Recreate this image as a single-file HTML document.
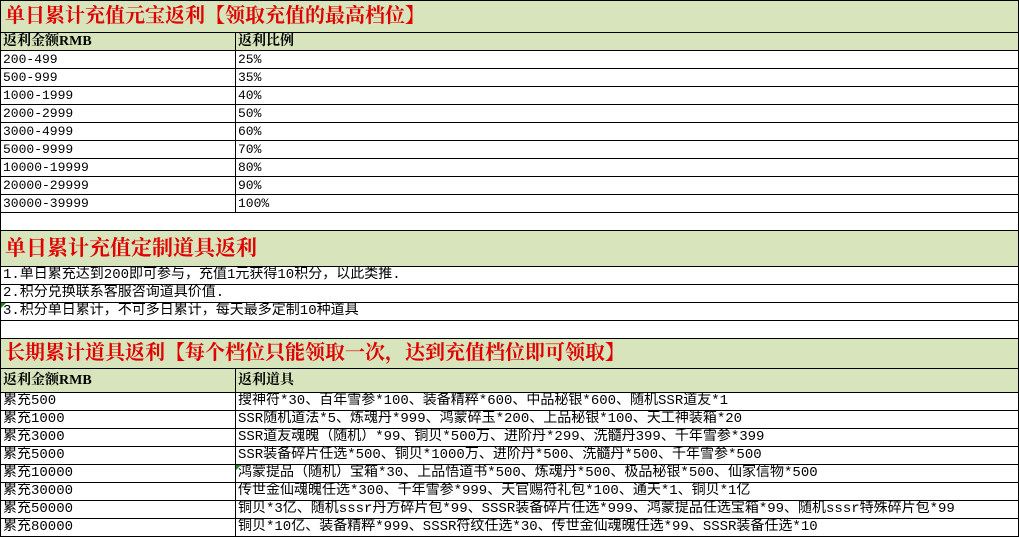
<!DOCTYPE html>
<html><head><meta charset="utf-8"><style>
*{margin:0;padding:0;box-sizing:border-box}
body{width:1019px;height:537px;overflow:hidden;background:#fff;font-family:"Liberation Mono","Noto Sans CJK SC",monospace;font-size:14px;color:#000;position:relative}
.r{position:absolute;left:0;width:1019px;border-bottom:1px solid #000;border-right:1px solid #000;border-left:1px solid #000}
.c{position:absolute;top:0;bottom:0;white-space:nowrap;overflow:hidden;padding-left:2px;line-height:17px}
.c1{left:0;width:235px;border-right:1px solid #000}
.c2{left:235px;right:0}
.n{font-size:13px}
.g{background:#d8e4bc}
.t{color:#e00000;font-family:"Liberation Serif","Noto Serif CJK SC",serif;font-weight:bold;padding-left:4px}
.h{font-weight:bold;font-family:"Liberation Serif","Noto Serif CJK SC",serif;font-size:14px}
.full{left:0;right:0}
.tri{position:absolute;width:0;height:0;border-top:5px solid #1a8a1a;border-right:5px solid transparent;left:0;top:0}
</style></head><body>
<div class="r g" style="top:0;height:33px;border-top:1px solid #000"><div class="c full t" style="font-size:20px;line-height:31px">单日累计充值元宝返利【领取充值的最高档位】</div></div>
<div class="r g" style="top:33px;height:18px"><div class="c c1 h">返利金额RMB</div><div class="c c2 h">返利比例</div></div>
<div class="r n" style="top:51px;height:18px"><div class="c c1">200-499</div><div class="c c2">25%</div></div>
<div class="r n" style="top:69px;height:18px"><div class="c c1">500-999</div><div class="c c2">35%</div></div>
<div class="r n" style="top:87px;height:18px"><div class="c c1">1000-1999</div><div class="c c2">40%</div></div>
<div class="r n" style="top:105px;height:18px"><div class="c c1">2000-2999</div><div class="c c2">50%</div></div>
<div class="r n" style="top:123px;height:18px"><div class="c c1">3000-4999</div><div class="c c2">60%</div></div>
<div class="r n" style="top:141px;height:18px"><div class="c c1">5000-9999</div><div class="c c2">70%</div></div>
<div class="r n" style="top:159px;height:18px"><div class="c c1">10000-19999</div><div class="c c2">80%</div></div>
<div class="r n" style="top:177px;height:18px"><div class="c c1">20000-29999</div><div class="c c2">90%</div></div>
<div class="r n" style="top:195px;height:18px"><div class="c c1">30000-39999</div><div class="c c2">100%</div></div>
<div class="r" style="top:213px;height:18px"></div>
<div class="r g" style="top:231px;height:36px"><div class="c full t" style="font-size:21px;line-height:34px">单日累计充值定制道具返利</div></div>
<div class="r" style="top:267px;height:18px"><div class="c full">1.单日累充达到200即可参与，充值1元获得10积分，以此类推.</div></div>
<div class="r" style="top:285px;height:18px"><div class="c full">2.积分兑换联系客服咨询道具价值.</div></div>
<div class="r" style="top:303px;height:18px"><div class="c full"><span class="tri"></span>3.积分单日累计，不可多日累计，每天最多定制10种道具</div></div>
<div class="r" style="top:321px;height:18px"></div>
<div class="r g" style="top:339px;height:30px"><div class="c full t" style="font-size:20px;line-height:29px">长期累计道具返利【每个档位只能领取一次，达到充值档位即可领取】</div></div>
<div class="r g" style="top:369px;height:24px"><div class="c c1 h" style="line-height:24px">返利金额RMB</div><div class="c c2 h" style="line-height:24px">返利道具</div></div>
<div class="r" style="top:393px;height:18px"><div class="c c1">累充500</div><div class="c c2">搜神符*30、百年雪参*100、装备精粹*600、中品秘银*600、随机SSR道友*1</div></div>
<div class="r" style="top:411px;height:18px"><div class="c c1">累充1000</div><div class="c c2">SSR随机道法*5、炼魂丹*999、鸿蒙碎玉*200、上品秘银*100、天工神装箱*20</div></div>
<div class="r" style="top:429px;height:18px"><div class="c c1">累充3000</div><div class="c c2">SSR道友魂魄（随机）*99、铜贝*500万、进阶丹*299、洗髓丹399、千年雪参*399</div></div>
<div class="r" style="top:447px;height:18px"><div class="c c1">累充5000</div><div class="c c2">SSR装备碎片任选*500、铜贝*1000万、进阶丹*500、洗髓丹*500、千年雪参*500</div></div>
<div class="r" style="top:465px;height:18px"><div class="c c1">累充10000</div><div class="c c2"><span class="tri"></span>鸿蒙提品（随机）宝箱*30、上品悟道书*500、炼魂丹*500、极品秘银*500、仙家信物*500</div></div>
<div class="r" style="top:483px;height:18px"><div class="c c1">累充30000</div><div class="c c2">传世金仙魂魄任选*300、千年雪参*999、天官赐符礼包*100、通天*1、铜贝*1亿</div></div>
<div class="r" style="top:501px;height:18px"><div class="c c1">累充50000</div><div class="c c2">铜贝*3亿、随机sssr丹方碎片包*99、SSSR装备碎片任选*999、鸿蒙提品任选宝箱*99、随机sssr特殊碎片包*99</div></div>
<div class="r" style="top:519px;height:18px"><div class="c c1">累充80000</div><div class="c c2">铜贝*10亿、装备精粹*999、SSSR符纹任选*30、传世金仙魂魄任选*99、SSSR装备任选*10</div></div>
</body></html>
